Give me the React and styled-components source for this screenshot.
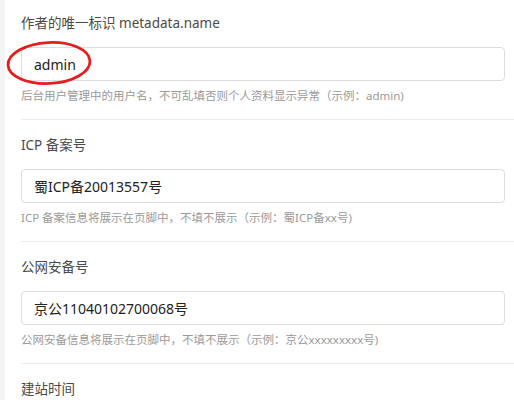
import React from "react";
import styled, { createGlobalStyle } from "styled-components";

const Global = createGlobalStyle`
  html, body { margin: 0; padding: 0; background: #ffffff; }
  body { font-family: "Noto Sans", "Noto Sans CJK SC", sans-serif; }
  * { box-sizing: border-box; }
`;

const Page = styled.div`
  display: flex;
  width: 514px;
  height: 400px;
  overflow: hidden;
  background: #ffffff;
`;

const Strip = styled.div`
  width: 5px;
  flex: 0 0 5px;
  background: #f3f4f6;
`;

const List = styled.div`
  flex: 1;
  padding-left: 16px;
  position: relative;
`;

const Item = styled.div`
  display: flex;
  flex-direction: column;
  padding: 15px 0 14px;
  border-bottom: 1px solid #ededed;
  &:first-child { padding-top: 13px; }
`;

const Label = styled.div`
  font-size: 13.5px;
  line-height: 20px;
  color: #4a4a4a;
  margin-bottom: 14px;
`;

const InputWrap = styled.div`
  position: relative;
  width: 484px;
`;

const Input = styled.input`
  display: block;
  width: 484px;
  height: 34px;
  padding: 0 12px;
  border: 1px solid #dcdde3;
  border-radius: 4px;
  font-family: "Noto Sans", "Noto Sans CJK SC", sans-serif;
  font-size: 14px;
  color: #222;
  background: #fff;
  outline: none;
`;

const Help = styled.div`
  margin-top: 6px;
  font-size: 11.5px;
  line-height: 18px;
  color: #9a9a9a;
  white-space: nowrap;
`;

const Circle = styled.svg`
  position: absolute;
  left: -15px;
  top: -6px;
  pointer-events: none;
  overflow: visible;
`;

const items = [
  {
    label: "作者的唯一标识 metadata.name",
    value: "admin",
    help: "后台用户管理中的用户名，不可乱填否则个人资料显示异常（示例：admin)",
    mark: true,
  },
  {
    label: "ICP 备案号",
    value: "蜀ICP备20013557号",
    help: "ICP 备案信息将展示在页脚中，不填不展示（示例：蜀ICP备xx号)",
  },
  {
    label: "公网安备号",
    value: "京公11040102700068号",
    help: "公网安备信息将展示在页脚中，不填不展示（示例：京公xxxxxxxxx号)",
  },
];

export default function App() {
  return (
    <>
      <Global />
      <Page>
        <Strip />
        <List>
          {items.map((it) => (
            <Item key={it.label}>
              <Label>{it.label}</Label>
              <InputWrap>
                <Input defaultValue={it.value} readOnly />
                {it.mark && (
                  <Circle width="86" height="44" viewBox="0 0 86 44">
                    <ellipse
                      cx="43"
                      cy="22"
                      rx="41"
                      ry="20.5"
                      fill="none"
                      stroke="#e41e1e"
                      strokeWidth="2.8"
                      transform="rotate(-3 43 22)"
                    />
                  </Circle>
                )}
              </InputWrap>
              <Help>{it.help}</Help>
            </Item>
          ))}
          <Item>
            <Label>建站时间</Label>
          </Item>
        </List>
      </Page>
    </>
  );
}
